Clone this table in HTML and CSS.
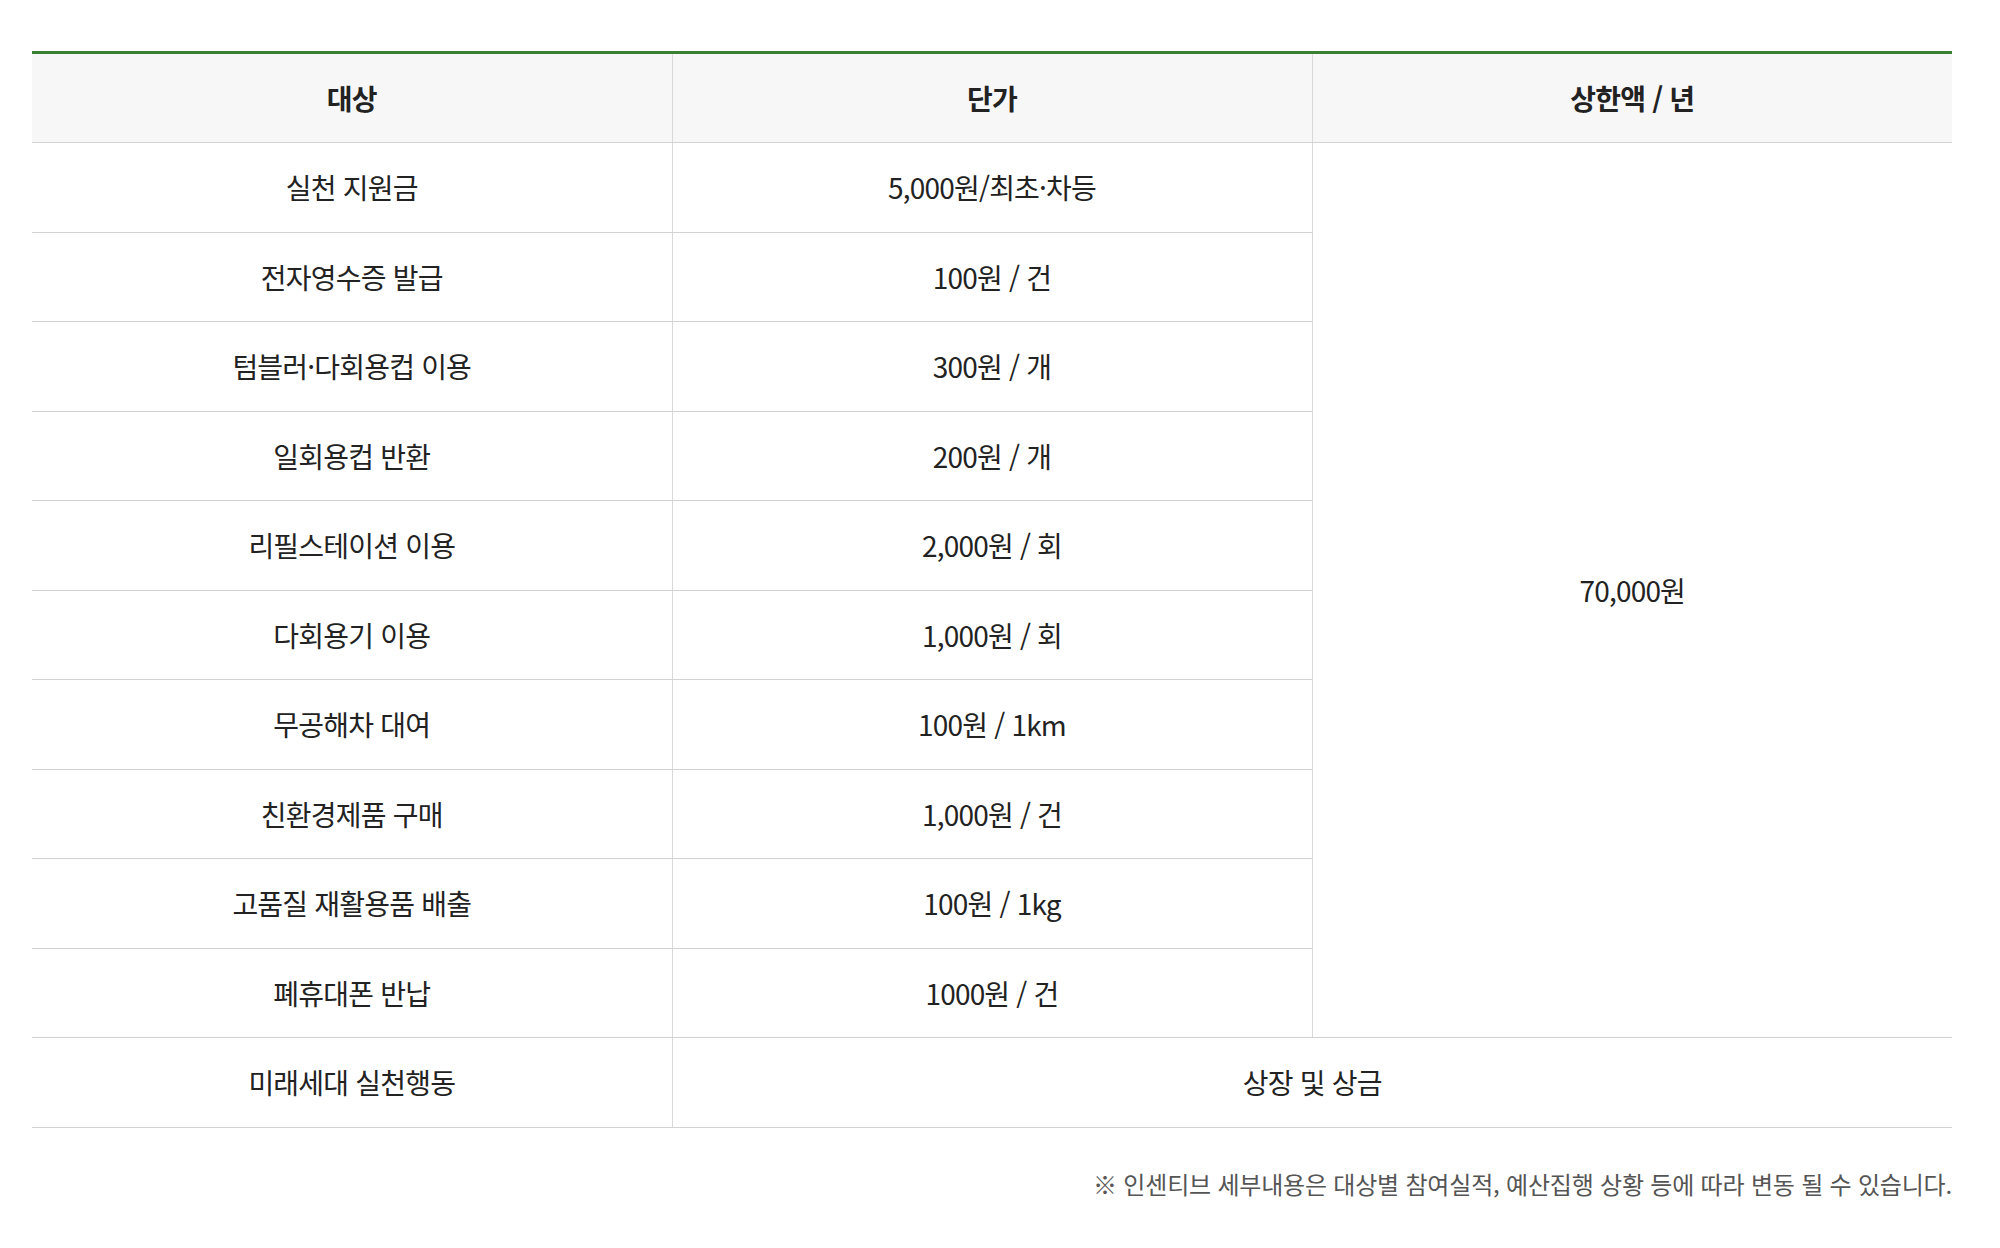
FILE: index.html
```html
<!DOCTYPE html>
<html lang="ko">
<head>
<meta charset="utf-8">
<title>인센티브</title>
<link rel="stylesheet" href="styles.css">
</head>
<body>
<div class="wrap">
  <table class="tbl">
    <colgroup>
      <col class="c"><col class="c"><col class="c">
    </colgroup>
    <thead>
      <tr><th>대상</th><th>단가</th><th>상한액 / 년</th></tr>
    </thead>
    <tbody>
      <tr><td>실천 지원금</td><td>5,000원/최초·차등</td><td rowspan="10" class="cap">70,000원</td></tr>
      <tr><td>전자영수증 발급</td><td>100원 / 건</td></tr>
      <tr><td>텀블러·다회용컵 이용</td><td>300원 / 개</td></tr>
      <tr><td>일회용컵 반환</td><td>200원 / 개</td></tr>
      <tr><td>리필스테이션 이용</td><td>2,000원 / 회</td></tr>
      <tr><td>다회용기 이용</td><td>1,000원 / 회</td></tr>
      <tr><td>무공해차 대여</td><td>100원 / 1km</td></tr>
      <tr><td>친환경제품 구매</td><td>1,000원 / 건</td></tr>
      <tr><td>고품질 재활용품 배출</td><td>100원 / 1kg</td></tr>
      <tr><td>폐휴대폰 반납</td><td>1000원 / 건</td></tr>
      <tr><td>미래세대 실천행동</td><td colspan="2">상장 및 상금</td></tr>
    </tbody>
  </table>
  <p class="note">※ 인센티브 세부내용은 대상별 참여실적, 예산집행 상황 등에 따라 변동 될 수 있습니다.</p>
</div>
</body>
</html>
```

FILE: styles.css
```css
html, body {
  margin: 0;
  padding: 0;
  background: #ffffff;
}
body {
  font-family: "Noto Sans CJK KR", "Noto Sans", sans-serif;
  color: #222222;
}
.wrap {
  padding: 51px 48px 0 32px;
}
.tbl {
  width: 1920px;
  border-collapse: collapse;
  table-layout: fixed;
  border-top: 3px solid #3b7f35;
}
.tbl .c {
  width: 640px;
}
.tbl th,
.tbl td {
  height: 88.5px;
  padding: 0;
  text-align: center;
  vertical-align: middle;
  font-size: 28px;
  letter-spacing: -0.8px;
  border-bottom: 1px solid #d2d2d2;
  border-left: 1px solid #d9d9d9;
}
.tbl th {
  height: 88px;
  background: #f7f7f7;
  font-weight: 700;
  color: #222222;
}
.tbl td {
  font-weight: 400;
  color: #222222;
}
.tbl tr > :first-child {
  border-left: none;
}
.tbl td.cap {
  border-left: 1px solid #d9d9d9;
}
.note {
  margin: 38px 0 0;
  text-align: right;
  font-size: 24px;
  letter-spacing: -0.2px;
  color: #555555;
}
```
